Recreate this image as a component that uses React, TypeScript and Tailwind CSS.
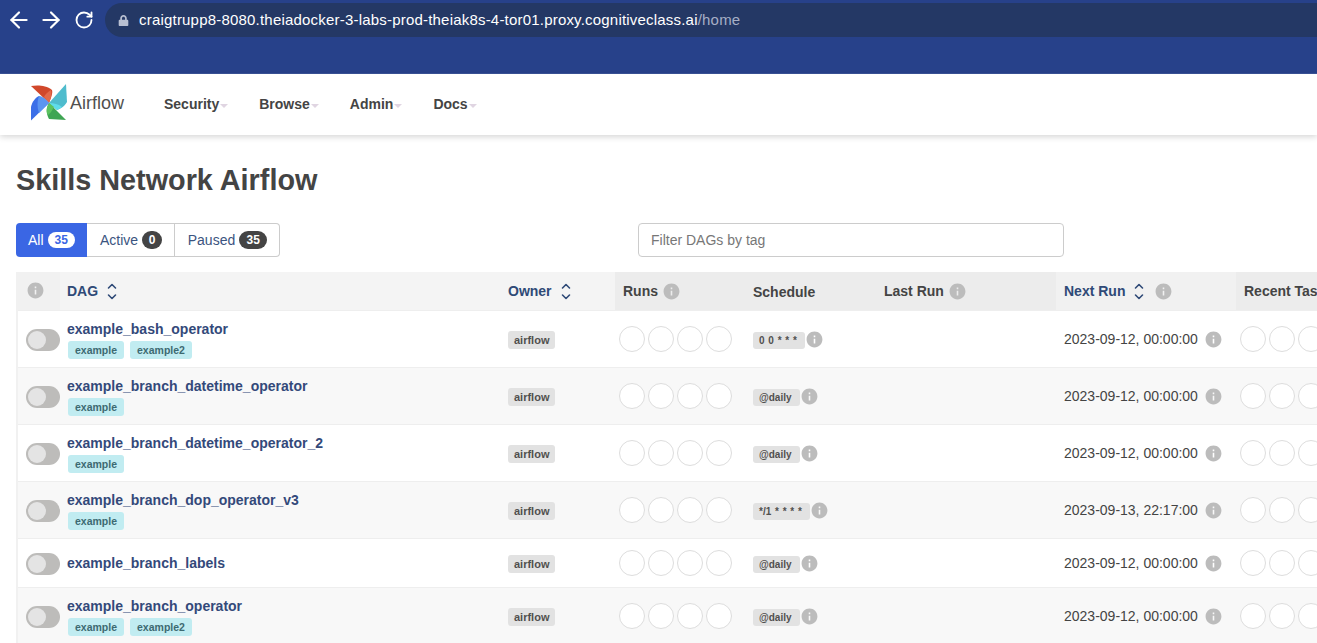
import { ArrowLeft, ArrowRight, RotateCw } from "lucide-react";
import { MdInfo } from "react-icons/md";
import { FaLock } from "react-icons/fa";

type Row = { name: string; tags: string[]; schedule: string; next: string };

const rows: Row[] = [
  { name: "example_bash_operator", tags: ["example", "example2"], schedule: "0 0 * * *", next: "2023-09-12, 00:00:00" },
  { name: "example_branch_datetime_operator", tags: ["example"], schedule: "@daily", next: "2023-09-12, 00:00:00" },
  { name: "example_branch_datetime_operator_2", tags: ["example"], schedule: "@daily", next: "2023-09-12, 00:00:00" },
  { name: "example_branch_dop_operator_v3", tags: ["example"], schedule: "*/1 * * * *", next: "2023-09-13, 22:17:00" },
  { name: "example_branch_labels", tags: [], schedule: "@daily", next: "2023-09-12, 00:00:00" },
  { name: "example_branch_operator", tags: ["example", "example2"], schedule: "@daily", next: "2023-09-12, 00:00:00" },
];

function Logo() {
  return (
    <svg width="37" height="37" viewBox="0 0 37 37" className="shrink-0 block">
      <path d="M0 2 C6 1 15 1 21 6 C22 9 20 14 18 19 Z" fill="#d1482b" />
      <path d="M13 13 L18 19 C20 14 21 9 20 6 C17 8 14 10 13 13 Z" fill="#e2694a" />
      <path d="M35 0 L36 18 C33 23 29 25 26 26 L18 19 Z" fill="#4fbccd" />
      <path d="M18 19 L26 26 C28 25 30 24 31 23 C27 20 23 19 18 19 Z" fill="#5fdcea" />
      <path d="M35 36 L18 35 C15 30 15 24 18 19 Z" fill="#3fa553" />
      <path d="M18 19 C15 24 15 28 17 31 C21 28 22 24 23 23 Z" fill="#5bc25f" />
      <path d="M0 36.5 L0 23 C1 18 4 14 8 12 L18 19 Z" fill="#3b6fe8" />
      <path d="M8 12 C11 12 15 15 18 19 L8 29 C6 24 6 17 8 12 Z" fill="#5b95f0" />
    </svg>
  );
}

function Info({ size = 19 }: { size?: number }) {
  return <MdInfo size={size} color="#bcbcbc" className="shrink-0" />;
}

function Sort() {
  return (
    <svg width="10" height="17" viewBox="0 0 10 17" fill="none" stroke="#2f4a77" strokeWidth="1.6" strokeLinecap="round" strokeLinejoin="round" className="shrink-0">
      <path d="M1.5 5 L5 1.5 L8.5 5" />
      <path d="M1.5 12 L5 15.5 L8.5 12" />
    </svg>
  );
}

function NavItem({ label }: { label: string }) {
  return (
    <div className="flex items-center">
      <span className="text-[14px] font-bold text-[#444]">{label}</span>
      <span className="ml-[1px] mt-[2px] w-0 h-0 border-x-[4px] border-x-transparent border-t-[4px] border-t-[#e0d5e2]" />
    </div>
  );
}

function Circles() {
  return (
    <div className="flex gap-[3px]">
      {[0, 1, 2, 3].map((i) => (
        <div key={i} className="w-[26px] h-[26px] shrink-0 rounded-full border border-[#dddddd] bg-white" />
      ))}
    </div>
  );
}

function Toggle() {
  return (
    <div className="w-[34px] h-[22px] mt-[2px] rounded-full bg-[#bdbcba] flex items-center pl-[2px]">
      <div className="w-[18px] h-[18px] rounded-full bg-[#e4e4e4]" />
    </div>
  );
}

export default function App() {
  return (
    <div className="w-[1317px] h-[643px] overflow-hidden bg-white font-['Liberation_Sans',Arial,sans-serif] text-[#444]">
      {/* Browser chrome */}
      <div className="h-[74px] bg-[#27418a] border-b border-[#3a5398]">
        <div className="h-[40px] flex items-center pl-[6px] gap-[6px]">
          <ArrowLeft size={26} color="#fff" strokeWidth={2} />
          <ArrowRight size={26} color="#fff" strokeWidth={2} />
          <RotateCw size={20} color="#fff" strokeWidth={2.2} className="ml-[4px]" />
          <div className="h-[34px] flex-1 ml-[5px] rounded-l-[17px] bg-[#243865] flex items-center pl-[13px] gap-[10px]">
            <FaLock size={11} color="#b9c0d2" />
            <span className="text-[15px] tracking-[0.2px] text-white whitespace-nowrap">
              craigtrupp8-8080.theiadocker-3-labs-prod-theiak8s-4-tor01.proxy.cognitiveclass.ai
              <span className="text-[#a6afc6]">/home</span>
            </span>
          </div>
        </div>
      </div>

      {/* Navbar */}
      <nav className="h-[61px] bg-white shadow-[0_2px_6px_rgba(0,0,0,0.16)] flex items-center pl-[31px]">
        <span className="mb-[4px]"><Logo /></span>
        <span className="ml-[2px] mb-[3px] text-[18px] text-[#51504f] w-[94px]">Airflow</span>
        <div className="flex gap-[31px]">
          <NavItem label="Security" />
          <NavItem label="Browse" />
          <NavItem label="Admin" />
          <NavItem label="Docs" />
        </div>
      </nav>

      <main className="pl-[16px]">
        <h1 className="mt-[28px] text-[28.8px] leading-[34px] font-bold text-[#444]">Skills Network Airflow</h1>

        {/* Filters */}
        <div className="mt-[26px] flex items-center">
          <div className="flex h-[34px] text-[14px]">
            <div className="w-[71px] flex items-center justify-center gap-[4px] rounded-l-[4px] bg-[#3a66e4] text-white">
              All
              <span className="h-[16px] px-[7px] rounded-full bg-white text-[#3a66e4] text-[12px] font-bold leading-[16px]">35</span>
            </div>
            <div className="w-[88px] pl-[1px] flex items-center justify-center gap-[4px] border-y border-r border-[#ccc] text-[#3b5480]">
              Active
              <span className="h-[18px] w-[20px] rounded-full bg-[#444] text-white text-[12px] font-bold leading-[18px] text-center">0</span>
            </div>
            <div className="w-[105px] pl-[1px] flex items-center justify-center gap-[4px] border-y border-r border-[#ccc] rounded-r-[4px] text-[#3b5480]">
              Paused
              <span className="h-[18px] w-[28px] rounded-full bg-[#444] text-white text-[12px] font-bold leading-[18px] text-center">35</span>
            </div>
          </div>
          <div className="ml-[358px] w-[426px] h-[34px] rounded-[4px] border border-[#ccc] flex items-center pl-[12px] text-[14px] text-[#777]">
            Filter DAGs by tag
          </div>
        </div>

        {/* DAG table */}
        <table className="mt-[15px] w-[1400px] table-fixed border-collapse border-l-[2px] border-l-[#f1f1f1] text-[14px]">
          <colgroup>
            <col className="w-[43px]" />
            <col className="w-[435px]" />
            <col className="w-[120px]" />
            <col className="w-[138px]" />
            <col className="w-[130px]" />
            <col className="w-[173px]" />
            <col className="w-[180px]" />
            <col />
          </colgroup>
          <thead>
            <tr className="h-[38px] text-left font-bold">
              <th className="bg-[#f1f1f1] pl-[8px]"><Info /></th>
              <th className="bg-[#f4f4f4] pl-[7px]">
                <div className="flex items-center gap-[9px] mt-[1px] text-[#2f4a77]">DAG <Sort /></div>
              </th>
              <th className="bg-[#f4f4f4] pl-[13px]">
                <div className="flex items-center gap-[9px] mt-[1px] text-[#2f4a77]">Owner <Sort /></div>
              </th>
              <th className="bg-[#ececec] pl-[8px]">
                <div className="flex items-center gap-[4px] mt-[1px]">Runs <Info /></div>
              </th>
              <th className="bg-[#ececec] pl-[0px]">
                <div className="mt-[3px]">Schedule</div>
              </th>
              <th className="bg-[#ececec] pl-[1px]">
                <div className="flex items-center gap-[4px] mt-[1px]">Last Run <Info /></div>
              </th>
              <th className="bg-[#f1f1f1] pl-[8px]">
                <div className="flex items-center gap-[9px] mt-[1px] text-[#2f4a77]">Next Run <Sort /><span className="ml-[1px]"><Info /></span></div>
              </th>
              <th className="bg-[#ececec] pl-[8px] whitespace-nowrap">
                <div className="mt-[1px]">Recent Tasks</div>
              </th>
            </tr>
          </thead>
          <tbody>
            {rows.map((r, i) => (
              <tr key={r.name} className={`${r.tags.length ? "h-[57px]" : "h-[49px]"} ${i % 2 ? "bg-[#f8f8f8]" : "bg-white"} border-t border-[#eeeeee]`}>
                <td className="pl-[8px]"><Toggle /></td>
                <td className="pl-[7px] align-middle">
                  <div className={`font-bold text-[#33497a] leading-[18px] ${r.tags.length ? "mt-[1px]" : ""}`}>{r.name}</div>
                  {r.tags.length > 0 && (
                    <div className="flex gap-[6px] mt-[3px] ml-[1px]">
                      {r.tags.map((t) => (
                        <span key={t} className="h-[18px] px-[7px] rounded-[3px] bg-[#c1ecf1] text-[#3d6a72] text-[10.5px] font-bold leading-[18px]">{t}</span>
                      ))}
                    </div>
                  )}
                </td>
                <td className="pl-[13px] pt-[2px]">
                  <span className="inline-block h-[18px] px-[6px] rounded-[3px] bg-[#e2e2e2] text-[#51504f] text-[11px] font-bold leading-[18px]">airflow</span>
                </td>
                <td className="pl-[4px] pt-[1px]"><Circles /></td>
                <td className="pt-[4px]">
                  <div className="flex items-center">
                    <span className="h-[17px] pl-[6px] pr-[8px] rounded-[3px] bg-[#e2e2e2] text-[#51504f] text-[10px] font-bold leading-[17px] whitespace-pre [word-spacing:1px]">{r.schedule}</span>
                    <span className="mb-[3px]"><Info /></span>
                  </div>
                </td>
                <td />
                <td className="pl-[8px] pt-[1px]">
                  <div className="flex items-center gap-[6px] text-[#444]">{r.next} <Info /></div>
                </td>
                <td className="pl-[4px] pt-[1px]"><Circles /></td>
              </tr>
            ))}
          </tbody>
        </table>
      </main>
    </div>
  );
}
